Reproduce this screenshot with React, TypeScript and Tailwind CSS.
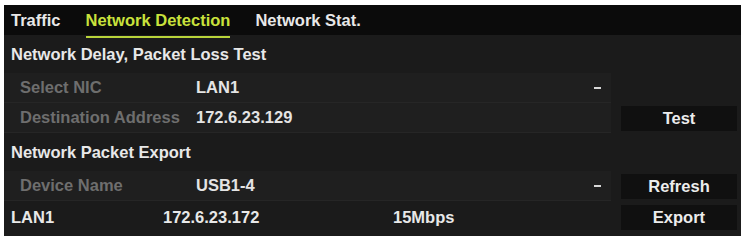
const font = { fontFamily: '"Liberation Sans", Arial, sans-serif' };

function Field({ label, value }: { label: string; value: string }) {
  return (
    <div className="flex h-[30px] items-center bg-[#1f1f1f] border-b border-[#262626]">
      <span className="w-[192px] pl-[16px] text-[#6e6e6e]">{label}</span>
      <span className="flex-1 text-[#e4e4e4]">{value}</span>
    </div>
  );
}

function Select({ label, value }: { label: string; value: string }) {
  return (
    <div className="flex h-[30px] items-center bg-[#1f1f1f] border-b border-[#262626]">
      <span className="w-[192px] pl-[16px] text-[#6e6e6e]">{label}</span>
      <span className="flex-1 text-[#e4e4e4]">{value}</span>
      <span className="mr-[10px] h-[2px] w-[7px] bg-[#d8d8d8]" />
    </div>
  );
}

function Button({ children }: { children: string }) {
  return (
    <div className="flex h-[25px] w-[116px] items-center justify-center bg-[#101010] text-[#ececec]">
      {children}
    </div>
  );
}

export default function App() {
  return (
    <div className="h-[240px] w-[745px] bg-white pl-[4px] pr-[4px] pt-[5px]" style={font}>
      <div className="flex h-[231px] flex-col bg-[#1b1b1b] text-[16.5px] font-bold">
        <div className="flex h-[30px] items-center bg-[#0b0b0b] pl-[7px]">
          <span className="text-[#e8e8e8]">Traffic</span>
          <span className="relative ml-[25px] text-[#c9e23c]">
            Network Detection
            <span className="absolute -bottom-[6px] left-0 h-[2px] w-full bg-[#b9d43a]" />
          </span>
          <span className="ml-[25px] text-[#e8e8e8]">Network Stat.</span>
        </div>

        <div className="flex h-[38px] items-center pl-[7px] text-[#e8e8e8]">
          Network Delay, Packet Loss Test
        </div>

        <div className="flex">
          <div className="flex-1">
            <Select label="Select NIC" value="LAN1" />
            <Field label="Destination Address" value="172.6.23.129" />
          </div>
          <div className="flex w-[130px] flex-col justify-end pb-[2px] pl-[10px]">
            <Button>Test</Button>
          </div>
        </div>

        <div className="flex h-[38px] items-center pl-[7px] text-[#e8e8e8]">
          Network Packet Export
        </div>

        <div className="flex h-[30px] items-center">
          <div className="flex-1">
            <Select label="Device Name" value="USB1-4" />
          </div>
          <div className="flex w-[130px] pl-[10px]">
            <Button>Refresh</Button>
          </div>
        </div>

        <div className="flex h-[32px] items-center text-[#e8e8e8]">
          <span className="w-[159px] pl-[7px]">LAN1</span>
          <span className="w-[230px]">172.6.23.172</span>
          <span className="flex-1">15Mbps</span>
          <div className="flex w-[130px] pl-[10px]">
            <Button>Export</Button>
          </div>
        </div>
      </div>
    </div>
  );
}
